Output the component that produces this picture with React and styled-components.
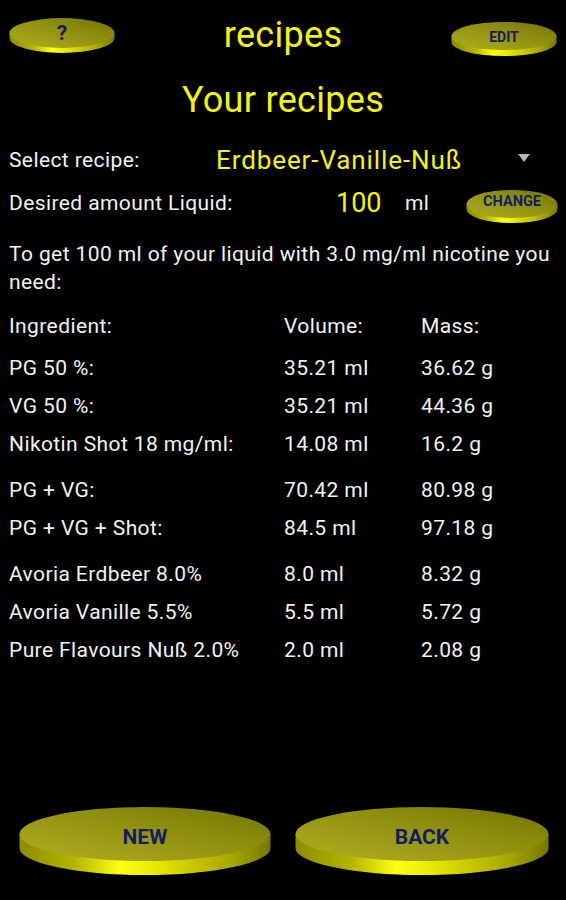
import React, { useId } from 'react';
import styled, { createGlobalStyle } from 'styled-components';

const GlobalStyle = createGlobalStyle`
  html, body { margin: 0; padding: 0; background: #000; }
  * { box-sizing: border-box; }
`;

const YELLOW = '#f6f600';
const TEXT = '#f2f2f2';

const Page = styled.div`
  min-height: 100vh;
  display: flex;
  flex-direction: column;
  padding: 14px 9px 25px 9px;
  background: #000;
  color: ${TEXT};
  font-family: Roboto, "Liberation Sans", sans-serif;
  font-size: 21px;
  letter-spacing: 0.4px;
`;

const Header = styled.div`
  display: grid;
  grid-template-columns: 106px 1fr 106px;
  align-items: start;
`;

const Title = styled.h1`
  margin: ${p => p.$top || 0}px 0 0;
  font-size: 36px;
  line-height: 42px;
  font-weight: 400;
  letter-spacing: 0.3px;
  color: ${YELLOW};
  text-align: center;
`;

const DiscButton = styled.button`
  position: relative;
  display: block;
  width: ${p => p.$w}px;
  height: ${p => p.$h}px;
  margin-top: ${p => p.$top || 0}px;
  padding: 0;
  border: 0;
  background: none;
  cursor: pointer;
  align-self: ${p => p.$align || 'auto'};
  & > svg { display: block; }
`;

const DiscLabel = styled.span`
  position: absolute;
  left: 0;
  right: 0;
  top: ${p => p.$shift || 0}px;
  height: ${p => p.$h}px;
  display: flex;
  align-items: center;
  justify-content: center;
  font-family: Roboto, "Liberation Sans", sans-serif;
  font-weight: 700;
  font-size: ${p => p.$size}px;
  letter-spacing: 0;
  color: #141c66;
`;

function Disc({ w, ry, t, size, label, top, align, shift }) {
  const id = useId().replace(/[^a-zA-Z0-9]/g, '');
  const h = ry * 2 + t;
  const rx = w / 2;
  return (
    <DiscButton $w={w} $h={h} $top={top} $align={align}>
      <svg width={w} height={h} viewBox={`0 0 ${w} ${h}`}>
        <defs>
          <linearGradient id={`face${id}`} x1="0" y1="1" x2="1" y2="0">
            <stop offset="0" stopColor="#b0b024" />
            <stop offset="0.55" stopColor="#919110" />
            <stop offset="1" stopColor="#747402" />
          </linearGradient>
          <linearGradient id={`rim${id}`} x1="0" y1="0" x2="1" y2="0">
            <stop offset="0" stopColor="#8c8c00" />
            <stop offset="0.22" stopColor="#b5b500" />
            <stop offset="0.4" stopColor="#ffff14" />
            <stop offset="0.56" stopColor="#e4e400" />
            <stop offset="0.85" stopColor="#a5a500" />
            <stop offset="1" stopColor="#767600" />
          </linearGradient>
        </defs>
        <path
          d={`M0.5 ${ry} L0.5 ${ry + t} A${rx - 0.5} ${ry} 0 0 0 ${w - 0.5} ${ry + t} L${w - 0.5} ${ry} Z`}
          fill={`url(#rim${id})`}
        />
        <ellipse cx={rx} cy={ry} rx={rx - 0.5} ry={ry} fill={`url(#face${id})`} />
      </svg>
      <DiscLabel $h={ry * 2} $size={size} $shift={shift}>{label}</DiscLabel>
    </DiscButton>
  );
}

const SelectRow = styled.div`
  display: grid;
  grid-template-columns: 207px 1fr auto;
  align-items: center;
  height: 40px;
  margin-top: 19px;
  padding-right: 27px;
`;

const AmountRow = styled.div`
  display: grid;
  grid-template-columns: 327px 69px 61px auto;
  align-items: center;
  height: 40px;
  margin-top: 3px;
`;

const Label = styled.span`
  white-space: nowrap;
`;

const Value = styled.span`
  font-size: ${p => p.$size}px;
  letter-spacing: ${p => p.$spacing || 0}px;
  color: ${YELLOW};
  white-space: nowrap;
`;

const Caret = styled.span`
  width: 0;
  height: 0;
  border-left: 6.5px solid transparent;
  border-right: 6.5px solid transparent;
  border-top: 8px solid #b5b5b5;
  margin-top: -4px;
`;

const Intro = styled.p`
  margin: 17px 0 0;
  line-height: 28px;
`;

const Row = styled.div`
  display: grid;
  grid-template-columns: 275px 137px 1fr;
  align-items: center;
  height: 38px;
  margin-top: ${p => p.$gap || 0}px;
  white-space: nowrap;
`;

const Spacer = styled.div`
  flex: 1;
`;

const Footer = styled.div`
  display: flex;
  justify-content: space-between;
  padding: 0 8px 0 10px;
`;

const rows = [
  ['PG 50 %:', '35.21 ml', '36.62 g', 4],
  ['VG 50 %:', '35.21 ml', '44.36 g', 0],
  ['Nikotin Shot 18 mg/ml:', '14.08 ml', '16.2 g', 0],
  ['PG + VG:', '70.42 ml', '80.98 g', 8],
  ['PG + VG + Shot:', '84.5 ml', '97.18 g', 0],
  ['Avoria Erdbeer 8.0%', '8.0 ml', '8.32 g', 8],
  ['Avoria Vanille 5.5%', '5.5 ml', '5.72 g', 0],
  ['Pure Flavours Nuß 2.0%', '2.0 ml', '2.08 g', 0],
];

export default function App() {
  return (
    <>
      <GlobalStyle />
      <Page>
        <Header>
          <Disc w={106} ry={15} t={5} size={21} label="?" top={4} />
          <Title>recipes</Title>
          <Disc w={106} ry={14} t={6} size={14} label="EDIT" top={8} shift={1} />
        </Header>

        <Title $top={23}>Your recipes</Title>

        <SelectRow>
          <Label>Select recipe:</Label>
          <Value $size={26} $spacing={0.9}>Erdbeer-Vanille-Nuß</Value>
          <Caret />
        </SelectRow>

        <AmountRow>
          <Label>Desired amount Liquid:</Label>
          <Value $size={27}>100</Value>
          <Label>ml</Label>
          <Disc w={92} ry={14} t={5} size={14.5} label="CHANGE" align="end" shift={-3} />
        </AmountRow>

        <Intro>To get 100 ml of your liquid with 3.0 mg/ml nicotine you need:</Intro>

        <Row $gap={11}>
          <span>Ingredient:</span>
          <span>Volume:</span>
          <span>Mass:</span>
        </Row>
        {rows.map(([name, vol, mass, gap]) => (
          <Row key={name} $gap={gap}>
            <span>{name}</span>
            <span>{vol}</span>
            <span>{mass}</span>
          </Row>
        ))}

        <Spacer />

        <Footer>
          <Disc w={252} ry={27} t={14} size={21} label="NEW" shift={3} />
          <Disc w={254} ry={27} t={14} size={21} label="BACK" shift={3} />
        </Footer>
      </Page>
    </>
  );
}
